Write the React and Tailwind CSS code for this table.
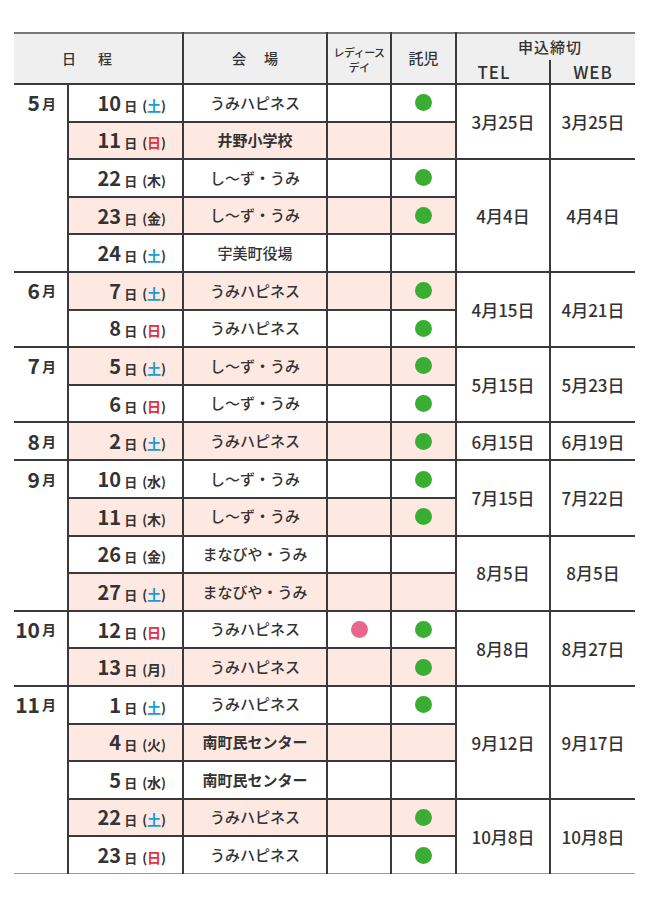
const rows = [
  { m: "5", d: "10", w: "土", v: "うみハピネス", t: true, dl: ["3月25日", "3月25日", 2] },
  { d: "11", w: "日", v: "井野小学校", b: true },
  { d: "22", w: "木", v: "し～ず・うみ", t: true, dl: ["4月4日", "4月4日", 3] },
  { d: "23", w: "金", v: "し～ず・うみ", t: true },
  { d: "24", w: "土", v: "宇美町役場" },
  { m: "6", d: "7", w: "土", v: "うみハピネス", t: true, dl: ["4月15日", "4月21日", 2] },
  { d: "8", w: "日", v: "うみハピネス", t: true },
  { m: "7", d: "5", w: "土", v: "し～ず・うみ", t: true, dl: ["5月15日", "5月23日", 2] },
  { d: "6", w: "日", v: "し～ず・うみ", t: true },
  { m: "8", d: "2", w: "土", v: "うみハピネス", t: true, dl: ["6月15日", "6月19日", 1] },
  { m: "9", d: "10", w: "水", v: "し～ず・うみ", t: true, dl: ["7月15日", "7月22日", 2] },
  { d: "11", w: "木", v: "し～ず・うみ", t: true },
  { d: "26", w: "金", v: "まなびや・うみ", dl: ["8月5日", "8月5日", 2] },
  { d: "27", w: "土", v: "まなびや・うみ" },
  { m: "10", d: "12", w: "日", v: "うみハピネス", l: true, t: true, dl: ["8月8日", "8月27日", 2] },
  { d: "13", w: "月", v: "うみハピネス", t: true },
  { m: "11", d: "1", w: "土", v: "うみハピネス", t: true, dl: ["9月12日", "9月17日", 3] },
  { d: "4", w: "火", v: "南町民センター", b: true },
  { d: "5", w: "水", v: "南町民センター", b: true },
  { d: "22", w: "土", v: "うみハピネス", t: true, dl: ["10月8日", "10月8日", 2] },
  { d: "23", w: "日", v: "うみハピネス", t: true },
];

const monthSpan = (i) => {
  let n = 1;
  while (i + n < rows.length && !rows[i + n].m) n++;
  return n;
};

function Day({ w }) {
  const color = w === "土" ? "text-[#1b9bd8]" : w === "日" ? "text-[#e2303e]" : "";
  return (
    <span className="ml-[5px] whitespace-nowrap font-bold">
      <span className="text-[13px]">(</span>
      <span className={`text-[14px] ${color}`}>{w}</span>
      <span className="text-[13px]">)</span>
    </span>
  );
}

function Dot({ color }) {
  return <span className={`mx-auto block h-[17px] w-[17px] rounded-full ${color}`} />;
}

export default function App() {
  const line = "border-[#3a3a3a]";
  const last = rows.length - 1;
  const endLine = (n) => (n === last ? "border-b border-b-[#9a9a9a]" : `border-b-2 ${line}`);
  return (
    <div
      className="min-h-[919px] bg-white pt-[32px] pl-[14px] text-[#333]"
      style={{ fontFamily: '"Noto Sans CJK JP", "Noto Sans", sans-serif' }}
    >
      <table className="w-[621px] table-fixed border-collapse">
        <colgroup>
          <col className="w-[54px]" />
          <col className="w-[115px]" />
          <col className="w-[144px]" />
          <col className="w-[64px]" />
          <col className="w-[65px]" />
          <col className="w-[94px]" />
          <col className="w-[85px]" />
        </colgroup>
        <thead className="bg-[#efefef]">
          <tr className="h-[27px]">
            <th rowSpan={2} colSpan={2} className={`border-t-2 border-t-[#777] border-r-2 border-b-2 ${line} text-[14px] font-medium tracking-[22px]`}>
              日程
            </th>
            <th rowSpan={2} className={`border-t-2 border-t-[#777] border-r-2 border-b-2 ${line} text-[14px] font-medium tracking-[18px]`}>
              <span className="pl-[18px]">会場</span>
            </th>
            <th rowSpan={2} className={`border-t-2 border-t-[#777] border-r-2 border-b-2 ${line} pt-[3px] text-[11px] font-medium leading-[15px] tracking-[-0.5px]`}>
              <div className="whitespace-nowrap">レディース</div>
              <div>デイ</div>
            </th>
            <th rowSpan={2} className={`border-t-2 border-t-[#777] border-r-2 border-b-2 ${line} text-[15px] font-medium`}>
              託児
            </th>
            <th colSpan={2} className="border-t-2 border-t-[#777] pl-[8px] align-middle text-[15px] font-medium leading-[20px] tracking-[1px]">
              申込締切
            </th>
          </tr>
          <tr className="h-[24px]">
            <th className={`border-r-2 border-b-2 ${line} pr-[18px] text-[17px] font-medium leading-[20px] tracking-[1px]`}>TEL</th>
            <th className={`border-b-2 ${line} text-[17px] font-medium leading-[20px] tracking-[1px]`}>WEB</th>
          </tr>
        </thead>
        <tbody>
          {rows.map((r, i) => {
            const pink = i % 2 === 1 ? "bg-[#fde9e1]" : "bg-white";
            const bottom = endLine(i);
            return (
              <tr key={i} className="h-[37.6px]">
                {r.m && (
                  <td rowSpan={monthSpan(i)} className={`border-r-2 border-r-[#3a3a3a] ${endLine(i + monthSpan(i) - 1)} align-top`}>
                    <div className="flex h-[36px] items-center justify-end pr-[11px] font-bold">
                      <span className="text-[21px]">{r.m}</span>
                      <span className="ml-[2px] text-[14px]">月</span>
                    </div>
                  </td>
                )}
                <td className={`border-r-2 ${bottom} border-r-[#3a3a3a] ${pink} pr-[16px] text-right`}>
                  <span className="text-[20px] font-bold">{r.d}</span>
                  <span className="ml-[3px] text-[13px] font-bold">日</span>
                  <Day w={r.w} />
                </td>
                <td className={`border-r-2 ${bottom} border-r-[#3a3a3a] ${pink} text-center text-[15px] ${r.b ? "font-bold" : "font-medium"}`}>
                  {r.v}
                </td>
                <td className={`border-r-2 ${bottom} border-r-[#3a3a3a] ${pink}`}>
                  {r.l && <Dot color="bg-[#e8678e]" />}
                </td>
                <td className={`border-r-2 ${bottom} border-r-[#3a3a3a] ${pink}`}>
                  {r.t && <Dot color="bg-[#3aae32]" />}
                </td>
                {r.dl && (
                  <>
                    <td rowSpan={r.dl[2]} className={`border-r-2 border-r-[#3a3a3a] ${endLine(i + r.dl[2] - 1)} text-center text-[17px] font-medium`}>
                      {r.dl[0]}
                    </td>
                    <td rowSpan={r.dl[2]} className={`${endLine(i + r.dl[2] - 1)} text-center text-[17px] font-medium`}>
                      {r.dl[1]}
                    </td>
                  </>
                )}
              </tr>
            );
          })}
        </tbody>
      </table>
    </div>
  );
}
